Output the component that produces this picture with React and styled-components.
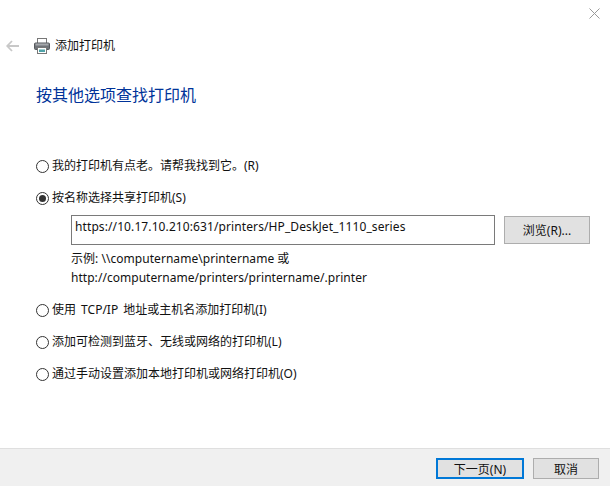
import React from "react"
import styled, { createGlobalStyle } from "styled-components"

const GlobalStyle = createGlobalStyle`
  html, body {
    margin: 0;
    padding: 0;
    background: #fff;
  }
  body {
    font-family: "Noto Sans", "Noto Sans CJK SC", sans-serif;
    font-size: 12px;
    color: #111;
  }
`

const Dialog = styled.div`
  width: 610px;
  height: 486px;
  display: flex;
  flex-direction: column;
  overflow: hidden;
  background: #fff;
`

const TitleBar = styled.div`
  height: 31px;
  display: flex;
  justify-content: flex-end;
  padding: 8px 10px 0 0;
  box-sizing: border-box;
`

const NavBar = styled.div`
  height: 29px;
  display: flex;
  align-items: center;
  padding-left: 6px;
`

const WizardName = styled.span`
  margin-left: 5px;
  line-height: 16px;
`

const PrinterWrap = styled.span`
  display: flex;
  margin-left: 15px;
`

const Heading = styled.h1`
  margin: 25px 0 0 36px;
  font-size: 16px;
  font-weight: 400;
  line-height: 20px;
  color: #003399;
`

const Options = styled.div`
  margin: 52px 0 0 36px;
  flex: 1;
  display: flex;
  flex-direction: column;
`

const OptionRow = styled.label`
  height: 16px;
  display: flex;
  align-items: center;
  gap: 3px;
  word-spacing: 2px;
  margin-bottom: ${(props) => props.$gap}px;
`

const RadioMark = styled.span`
  width: 11px;
  height: 11px;
  flex: none;
  border: 1px solid #333;
  border-radius: 50%;
  display: flex;
  align-items: center;
  justify-content: center;
  background: #fff;
  margin-top: 3px;
  &::after {
    content: "";
    width: 7px;
    height: 7px;
    border-radius: 50%;
    background: ${(props) => (props.$checked ? "#333" : "transparent")};
  }
`

const PathBlock = styled.div`
  margin: 0 0 14px 35px;
`

const PathRow = styled.div`
  display: flex;
  align-items: center;
  gap: 9px;
`

const PathInput = styled.div`
  width: 419px;
  height: 26px;
  border: 1px solid #7a7a7a;
  padding: 2px 0 0 3px;
  line-height: 18px;
  letter-spacing: 0.1px;
`

const Button = styled.div`
  box-sizing: border-box;
  width: ${(props) => props.$width}px;
  height: ${(props) => props.$height}px;
  display: flex;
  align-items: center;
  justify-content: center;
  background: #e1e1e1;
  border: ${(props) => (props.$primary ? "2px solid #0078d7" : "1px solid #adadad")};
`

const Hint = styled.div`
  margin-top: 4px;
  line-height: 19px;
  letter-spacing: 0.04px;
`

const Footer = styled.div`
  box-sizing: border-box;
  height: 38px;
  border-top: 1px solid #dfdfdf;
  background: #f0f0f0;
  display: flex;
  justify-content: flex-end;
  align-items: flex-start;
  gap: 9px;
  padding: 9px 11px 0 0;
`

const CloseIcon = () => (
  <svg width="11" height="11" viewBox="0 0 11 11">
    <path d="M0.5 0.5 L10.5 10.5 M10.5 0.5 L0.5 10.5" stroke="#999" strokeWidth="1" fill="none" />
  </svg>
)

const BackIcon = () => (
  <svg width="13" height="12" viewBox="0 0 13 12">
    <path d="M6 1 L1.2 6 L6 11 M1.2 6 H13" stroke="#c8c8c8" strokeWidth="1.8" fill="none" />
  </svg>
)

const PrinterIcon = () => (
  <svg width="16" height="16" viewBox="0 0 16 16">
    <rect x="3.5" y="0.5" width="9" height="5" fill="#fff" stroke="#777" />
    <rect x="0.5" y="5" width="15" height="6.5" rx="1" fill="#6f7378" stroke="#55585c" />
    <rect x="1.5" y="5.5" width="13" height="2" fill="#a5a8ab" />
    <rect x="3.5" y="9.5" width="9" height="6" fill="#fff" stroke="#777" />
    <rect x="5" y="11.5" width="6" height="2.5" fill="#4fa3a8" />
  </svg>
)

const Option = ({ label, checked, gap }) => (
  <OptionRow $gap={gap}>
    <RadioMark $checked={checked} />
    <span>{label}</span>
  </OptionRow>
)

const App = () => {
  return (
    <Dialog>
      <GlobalStyle />
      <TitleBar>
        <CloseIcon />
      </TitleBar>
      <NavBar>
        <BackIcon />
        <PrinterWrap>
          <PrinterIcon />
        </PrinterWrap>
        <WizardName>添加打印机</WizardName>
      </NavBar>
      <Heading>按其他选项查找打印机</Heading>
      <Options>
        <Option label="我的打印机有点老。请帮我找到它。(R)" gap={16} />
        <Option label="按名称选择共享打印机(S)" checked gap={10} />
        <PathBlock>
          <PathRow>
            <PathInput>https://10.17.10.210:631/printers/HP_DeskJet_1110_series</PathInput>
            <Button $width={86} $height={28}>浏览(R)...</Button>
          </PathRow>
          <Hint>
            示例: \\computername\printername 或
            <br />
            http://computername/printers/printername/.printer
          </Hint>
        </PathBlock>
        <Option label="使用 TCP/IP 地址或主机名添加打印机(I)" gap={16} />
        <Option label="添加可检测到蓝牙、无线或网络的打印机(L)" gap={16} />
        <Option label="通过手动设置添加本地打印机或网络打印机(O)" gap={0} />
      </Options>
      <Footer>
        <Button $primary $width={88} $height={21}>下一页(N)</Button>
        <Button $width={66} $height={21}>取消</Button>
      </Footer>
    </Dialog>
  )
}

export default App
